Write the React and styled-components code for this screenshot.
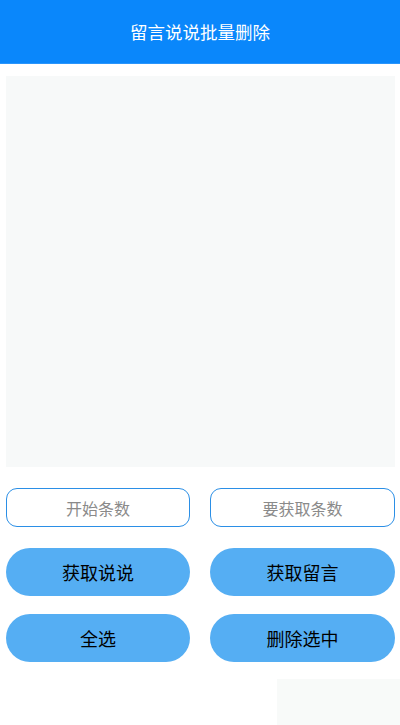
import styled, { createGlobalStyle } from 'styled-components';

const GlobalStyle = createGlobalStyle`
  html, body {
    margin: 0;
    padding: 0;
    background: #ffffff;
    font-family: "Noto Sans CJK SC", "Noto Sans", sans-serif;
  }
`;

const Page = styled.div`
  width: 400px;
  height: 725px;
  display: flex;
  flex-direction: column;
  background: #ffffff;
  overflow: hidden;
`;

const Header = styled.header`
  height: 63px;
  display: flex;
  align-items: center;
  justify-content: center;
  background: #0a87fb;
  border-bottom: 1px solid #2a95fb;
  color: #ffffff;
  font-size: 17.5px;
  flex-shrink: 0;
`;

const Body = styled.main`
  display: flex;
  flex-direction: column;
  padding: 12px 5px 0 6px;
`;

const ListPanel = styled.div`
  height: 391px;
  background: #f7f9f9;
`;

const Row = styled.div`
  display: grid;
  grid-template-columns: 184px 185px;
  justify-content: space-between;
  margin-top: ${(p) => p.$gap}px;
`;

const Field = styled.input`
  box-sizing: border-box;
  height: 39px;
  width: 100%;
  border: 1.5px solid #2b8fe6;
  border-radius: 11px;
  background: #ffffff;
  text-align: center;
  font-family: inherit;
  font-size: 16px;
  color: #333;
  outline: none;

  &::placeholder {
    color: #8a8a8a;
  }
`;

const PillButton = styled.button`
  height: 48px;
  width: 100%;
  border: none;
  border-radius: 24px;
  background: #55aef3;
  color: #000000;
  font-family: inherit;
  font-size: 18px;
  cursor: pointer;
`;

const Footer = styled.div`
  display: flex;
  justify-content: flex-end;
  margin-top: 17px;
  margin-right: -5px;
`;

const FooterBlock = styled.div`
  width: 123px;
  height: 60px;
  background: #f8faf9;
`;

export default function App() {
  return (
    <Page>
      <GlobalStyle />
      <Header>留言说说批量删除</Header>
      <Body>
        <ListPanel />
        <Row $gap={21}>
          <Field placeholder="开始条数" />
          <Field placeholder="要获取条数" />
        </Row>
        <Row $gap={21}>
          <PillButton>获取说说</PillButton>
          <PillButton>获取留言</PillButton>
        </Row>
        <Row $gap={18}>
          <PillButton>全选</PillButton>
          <PillButton>删除选中</PillButton>
        </Row>
        <Footer>
          <FooterBlock />
        </Footer>
      </Body>
    </Page>
  );
}
